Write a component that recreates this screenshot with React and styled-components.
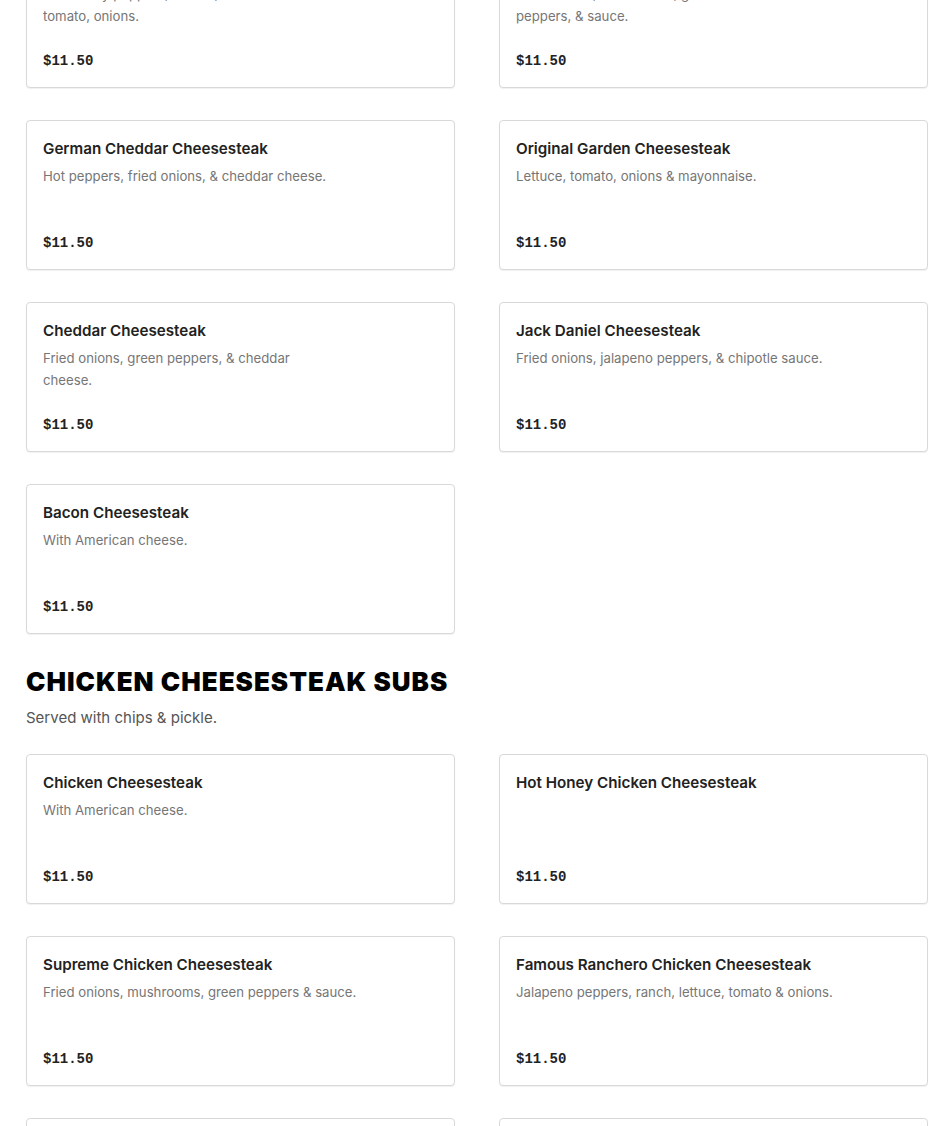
import React from "react";
import styled, { createGlobalStyle } from "styled-components";

const GlobalStyle = createGlobalStyle`
  html, body {
    margin: 0;
    padding: 0;
    background: #ffffff;
    font-family: Inter, "Liberation Sans", Arial, sans-serif;
    color: #222222;
    overflow: hidden;
  }
`;

const steakSubs = [
  {
    name: "Philly Cheesesteak",
    desc: "Hot cherry peppers, lettuce,\ntomato, onions.",
    price: "$11.50",
  },
  {
    name: "Supreme Cheesesteak",
    desc: "Fried onions, mushrooms, green\npeppers, & sauce.",
    price: "$11.50",
  },
  {
    name: "German Cheddar Cheesesteak",
    desc: "Hot peppers, fried onions, & cheddar cheese.",
    price: "$11.50",
  },
  {
    name: "Original Garden Cheesesteak",
    desc: "Lettuce, tomato, onions & mayonnaise.",
    price: "$11.50",
  },
  {
    name: "Cheddar Cheesesteak",
    desc: "Fried onions, green peppers, & cheddar\ncheese.",
    price: "$11.50",
  },
  {
    name: "Jack Daniel Cheesesteak",
    desc: "Fried onions, jalapeno peppers, & chipotle sauce.",
    price: "$11.50",
  },
  {
    name: "Bacon Cheesesteak",
    desc: "With American cheese.",
    price: "$11.50",
  },
];

const chickenSubs = [
  {
    name: "Chicken Cheesesteak",
    desc: "With American cheese.",
    price: "$11.50",
  },
  { name: "Hot Honey Chicken Cheesesteak", desc: "", price: "$11.50" },
  {
    name: "Supreme Chicken Cheesesteak",
    desc: "Fried onions, mushrooms, green peppers & sauce.",
    price: "$11.50",
  },
  {
    name: "Famous Ranchero Chicken Cheesesteak",
    desc: "Jalapeno peppers, ranch, lettuce, tomato & onions.",
    price: "$11.50",
  },
  { name: "Chicken Philly", desc: "With provolone cheese.", price: "$11.50" },
  { name: "BBQ Chicken Cheesesteak", desc: "With BBQ sauce.", price: "$11.50" },
];

const MenuItem = ({ item }) => (
  <Card>
    <ItemName>{item.name}</ItemName>
    {item.desc && <ItemDesc>{item.desc}</ItemDesc>}
    <ItemPrice>{item.price}</ItemPrice>
  </Card>
);

const App = () => {
  return (
    <>
      <GlobalStyle />
      <Page>
        <ItemGrid>
          {steakSubs.map((item, index) => (
            <MenuItem key={index} item={item} />
          ))}
        </ItemGrid>

        <Section>
          <SectionTitle>Chicken Cheesesteak Subs</SectionTitle>
          <SectionNote>Served with chips &amp; pickle.</SectionNote>
          <ItemGrid>
            {chickenSubs.map((item, index) => (
              <MenuItem key={index} item={item} />
            ))}
          </ItemGrid>
        </Section>
      </Page>
    </>
  );
};

export default App;

const Page = styled.div`
  margin-top: -62px;
  padding: 0 22px 40px 26px;
`;

const ItemGrid = styled.div`
  display: grid;
  grid-template-columns: 1fr 1fr;
  column-gap: 44px;
  row-gap: 32px;
`;

const Card = styled.div`
  display: flex;
  flex-direction: column;
  box-sizing: border-box;
  height: 150px;
  padding: 16px;
  border: 1px solid #d9d9d9;
  border-radius: 4px;
  box-shadow: 0 1px 1px rgba(0, 0, 0, 0.06);
  background: #ffffff;
`;

const ItemName = styled.div`
  font-size: 15.2px;
  line-height: 24px;
  font-weight: 600;
  color: #222222;
`;

const ItemDesc = styled.div`
  margin-top: 4px;
  font-size: 13.2px;
  line-height: 22px;
  color: #767676;
  white-space: pre-line;
`;

const ItemPrice = styled.div`
  margin-top: auto;
  font-family: "Liberation Mono", "DejaVu Sans Mono", monospace;
  font-size: 14px;
  line-height: 20px;
  font-weight: 700;
  color: #222222;
`;

const Section = styled.section`
  margin-top: 32px;
`;

const SectionTitle = styled.h2`
  margin: 0;
  font-family: Inter, "Liberation Sans", sans-serif;
  font-size: 26px;
  line-height: 32px;
  font-weight: 900;
  letter-spacing: 1px;
  text-transform: uppercase;
  color: #000000;
`;

const SectionNote = styled.p`
  margin: 9px 0 25px;
  font-size: 15px;
  line-height: 22px;
  color: #555555;
`;
